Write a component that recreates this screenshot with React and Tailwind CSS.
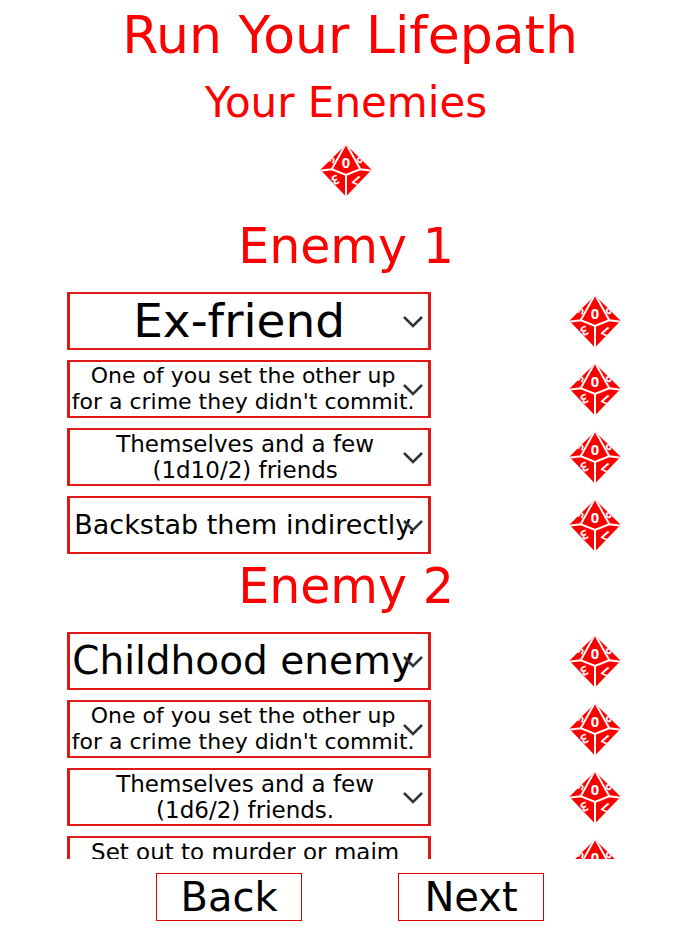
import React, { useState } from 'react';

const enemies = [
    {
        title: 'Enemy 1',
        rows: [
            { label: 'Who', value: 'Ex-friend', size: 'text-[47px]/[52px] pr-5' },
            { label: 'Cause', value: "One of you set the other up for\u00a0a crime they didn't commit.", size: 'text-[22px]/[26px] pr-3' },
            { label: 'Forces', value: 'Themselves and a few (1d10/2) friends', size: 'text-[23px]/[26px] pl-6 pr-8' },
            { label: 'Revenge', value: 'Backstab them indirectly.', size: 'text-[27px]/[54px] pr-2' },
        ],
    },
    {
        title: 'Enemy 2',
        rows: [
            { label: 'Who', value: 'Childhood enemy', size: 'text-[39px]/[52px] pr-3' },
            { label: 'Cause', value: "One of you set the other up for\u00a0a crime they didn't commit.", size: 'text-[22px]/[26px] pr-3' },
            { label: 'Forces', value: 'Themselves and a few (1d6/2) friends.', size: 'text-[23px]/[26px] pl-6 pr-8' },
            { label: 'Revenge', value: 'Set out to murder or maim them.', size: 'text-[23px]/[26px] pr-2' },
        ],
    },
];

function DiceButton({ label }) {
    return (
        <button type="button" aria-label={label} className="block cursor-pointer">
            <svg viewBox="0 0 156 158" className="w-[52px] h-[53px]" aria-hidden="true">
                <defs>
                    <clipPath id="die">
                        <path d="M78 1 L155 77 L78 157 L1 77 Z" />
                    </clipPath>
                </defs>
                <g clipPath="url(#die)">
                    <rect width="156" height="158" fill="#ff0000" />
                    <path d="M78 -2 L35 75 L78 92 L121 75 Z M-2 80 L35 75 M158 80 L121 75 M78 92 V158" fill="none" stroke="#fff" strokeWidth="6" />
                    <g fill="#fff" fontFamily="Open Sans, sans-serif" fontWeight="700" textAnchor="middle">
                        <text x="78" y="71" fontSize="44">0</text>
                        <text transform="translate(46 107) rotate(155)" y="13" fontSize="38">3</text>
                        <text transform="translate(110 107) rotate(205)" y="13" fontSize="38">7</text>
                        <text transform="translate(32 45) rotate(-60)" y="13" fontSize="38">9</text>
                        <text transform="translate(124 45) rotate(60)" y="13" fontSize="38">8</text>
                    </g>
                </g>
            </svg>
        </button>
    );
}

function EnemyRow({ title, row }) {
    const [value, setValue] = useState(row.value);

    return (
        <div className="flex h-[68px] items-center">
            <div className="flex w-[72%] justify-center">
                <div className="relative w-[73%]">
                    <select
                        aria-label={`${title} ${row.label}`}
                        value={value}
                        onChange={e => setValue(e.target.value)}
                        className={`block h-[58px] w-full appearance-none border-x-3 border-y-2 border-[#e01818] bg-white text-center whitespace-normal text-black ${row.size}`}
                    >
                        <option value={row.value}>{row.value}</option>
                    </select>
                    <svg viewBox="0 0 20 12" className="pointer-events-none absolute top-6 right-2 h-3 w-5" aria-hidden="true">
                        <path d="M1 1 L10 10 L19 1" fill="none" stroke="#333" strokeWidth="2.5" />
                    </svg>
                </div>
            </div>
            <div className="flex w-[28%] justify-center">
                <DiceButton label={`Roll ${title} ${row.label}`} />
            </div>
        </div>
    );
}

export default function App() {
    return (
        <div className="flex h-screen flex-col bg-white font-['DejaVu_Sans',sans-serif]">
            <h1 className="shrink-0 text-center text-[52px]/[71px] text-[#ff0000]">Run Your Lifepath</h1>
            <main className="min-h-0 flex-1 overflow-y-auto pr-2 [scrollbar-width:none]">
                <h2 className="py-1 text-center text-[42px]/[56px] text-[#ff0000]">Your Enemies</h2>
                <div className="flex h-[70px] items-center justify-center">
                    <DiceButton label="Roll all enemies" />
                </div>
                <div className="pt-[14px]">
                    {enemies.map(enemy => (
                        <section key={enemy.title}>
                            <h3 className="pb-3 text-center text-[49px]/[56px] text-[#ff0000]">{enemy.title}</h3>
                            {enemy.rows.map(row => (
                                <EnemyRow key={row.label} title={enemy.title} row={row} />
                            ))}
                        </section>
                    ))}
                </div>
            </main>
            <footer className="flex h-[75px] shrink-0 items-center justify-center gap-24">
                <button type="button" className="h-[48px] w-[146px] border border-[#e00000] text-[40px]/[44px] text-black">Back</button>
                <button type="button" className="h-[48px] w-[146px] border border-[#e00000] text-[40px]/[44px] text-black">Next</button>
            </footer>
        </div>
    );
}
